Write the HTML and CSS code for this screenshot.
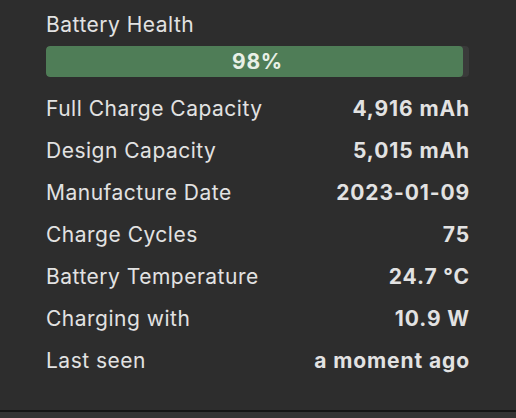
FILE: index.html
```html
<!DOCTYPE html>
<html>
<head>
<meta charset="utf-8">
<link rel="stylesheet" href="styles.css">
</head>
<body>
<div class="panel">
  <div class="title">Battery Health</div>
  <div class="bar">
    <div class="fill" style="width:98.6%"></div>
    <span class="pct">98%</span>
  </div>
  <div class="rows">
    <div class="row"><span class="label">Full Charge Capacity</span><span class="value">4,916 mAh</span></div>
    <div class="row"><span class="label">Design Capacity</span><span class="value">5,015 mAh</span></div>
    <div class="row"><span class="label">Manufacture Date</span><span class="value">2023-01-09</span></div>
    <div class="row"><span class="label">Charge Cycles</span><span class="value">75</span></div>
    <div class="row"><span class="label">Battery Temperature</span><span class="value">24.7 °C</span></div>
    <div class="row"><span class="label">Charging with</span><span class="value">10.9 W</span></div>
    <div class="row"><span class="label">Last seen</span><span class="value">a moment ago</span></div>
  </div>
</div>
<div class="footer"></div>
</body>
</html>
```
FILE: styles.css
```css
html, body {
  margin: 0;
  padding: 0;
  background: #2d2d2d;
  font-family: Inter, "Liberation Sans", sans-serif;
  color: #e2e2e2;
}
.panel {
  height: 410px;
  box-sizing: border-box;
  padding: 11px 47px 0 46px;
  display: flex;
  flex-direction: column;
}
.title {
  font-size: 21px;
  letter-spacing: 0.5px;
  line-height: 28px;
}
.bar {
  position: relative;
  margin-top: 7px;
  height: 31px;
  background: #3a3a3a;
  border-radius: 4px;
  overflow: hidden;
}
.fill {
  height: 100%;
  background: #4f7d57;
  border-radius: 4px;
}
.pct {
  position: absolute;
  inset: 0;
  display: flex;
  align-items: center;
  justify-content: center;
  font-weight: 700;
  font-size: 21px;
  letter-spacing: 0.8px;
  color: #e8f0e6;
}
.rows {
  margin-top: 10px;
  display: flex;
  flex-direction: column;
}
.row {
  display: flex;
  justify-content: space-between;
  align-items: center;
  height: 42px;
  font-size: 21px;
  letter-spacing: 0.5px;
}
.value {
  font-weight: 700;
  letter-spacing: 0.9px;
  margin-right: -1px;
}
.footer {
  height: 2px;
  background: #151515;
}
body::after {
  content: "";
  display: block;
  height: 6px;
  background: #333;
}
```
